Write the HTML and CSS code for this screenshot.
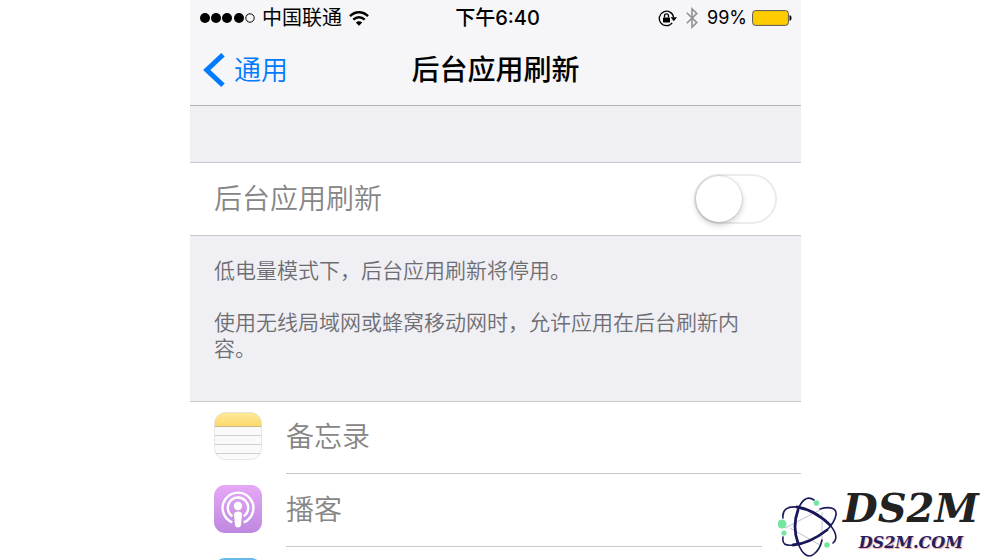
FILE: index.html
```
<!DOCTYPE html>
<html lang="zh-CN">
<head>
    <meta charset="UTF-8">
    <meta name="viewport" content="width=device-width, initial-scale=1.0">
    <title>后台应用刷新</title>
    <link rel="stylesheet" href="styles.css">
</head>
<body>
    <main class="phone">
        <header class="top">
            <div class="status">
                <div class="carrier">
                    <svg width="56" height="12" viewBox="0 0 56 12">
                        <circle cx="6" cy="6" r="5"/><circle cx="17" cy="6" r="5"/><circle cx="28" cy="6" r="5"/><circle cx="40" cy="6" r="5"/>
                        <circle cx="51" cy="6" r="4.2" fill="none" stroke="#000"/>
                    </svg>
                    <span>中国联通</span>
                    <svg width="20" height="15" viewBox="0 0 20 15" fill="none" stroke="#000" stroke-width="2.4">
                        <path d="M1 5.2C6 0 14 0 19 5.2"/>
                        <path d="M4.3 8.7C7.6 5.4 12.4 5.4 15.7 8.7"/>
                        <path d="M10 14.7L6.8 11.4C8.7 9.7 11.3 9.7 13.2 11.4Z" fill="#000" stroke="none"/>
                    </svg>
                </div>
                <div class="time">下午6:40</div>
                <div class="indicators">
                    <svg width="19" height="17" viewBox="0 0 19 17">
                        <path d="M14.2 12.8A7.2 7.2 0 1 1 15.6 7.4" fill="none" stroke="#000" stroke-width="1.3"/>
                        <path d="M12.6 7.3H19L15.8 11.2Z"/>
                        <rect x="5" y="7.4" width="7" height="5" rx=".6"/>
                        <path d="M6.5 7.6V5.9a2 2 0 0 1 4 0V7.6" fill="none" stroke="#000" stroke-width="1.3"/>
                    </svg>
                    <svg width="12" height="22" viewBox="0 0 12 22" fill="none" stroke="#929294" stroke-width="1.6">
                        <path d="M.8 5.8L10.8 15.6L6 20.2V1.8L10.8 6.4L.8 16.2"/>
                    </svg>
                    <span>99%</span>
                    <svg width="40" height="16" viewBox="0 0 40 16">
                        <rect x=".6" y=".6" width="35.8" height="14.8" rx="3" fill="#fc0" stroke="#555"/>
                        <path d="M37.5 5.2C40.2 5.2 40.2 10.8 37.5 10.8Z"/>
                    </svg>
                </div>
            </div>
            <nav class="nav">
                <a class="back" href="#">
                    <svg width="22" height="34" viewBox="0 0 22 34" fill="none" stroke="#007aff" stroke-width="5">
                        <path d="M20 1.8L3.8 17L20 32.2"/>
                    </svg>
                    <span>通用</span>
                </a>
                <h1>后台应用刷新</h1>
            </nav>
        </header>

        <section class="switch-row">
            <label for="refresh">后台应用刷新</label>
            <input type="checkbox" id="refresh" class="switch" disabled>
        </section>

        <section class="notes">
            <p>低电量模式下，后台应用刷新将停用。</p>
            <p>使用无线局域网或蜂窝移动网时，允许应用在后台刷新内容。</p>
        </section>

        <ul class="apps">
            <li>
                <svg class="icon" width="48" height="48" viewBox="0 0 48 48">
                    <defs>
                        <linearGradient id="yellow" x2="0" y2="1"><stop stop-color="#ffe99b"/><stop offset="1" stop-color="#fbd969"/></linearGradient>
                        <clipPath id="tile"><rect x=".5" y=".5" width="47" height="47" rx="11"/></clipPath>
                    </defs>
                    <g clip-path="url(#tile)">
                        <path d="M0 0H48V48H0Z" fill="#fafafa"/>
                        <path d="M0 0H48V15H0Z" fill="url(#yellow)"/>
                        <path d="M0 14.5H48" stroke="#cbb98d"/>
                        <path d="M0 23.5H48M0 32.5H48M0 41.5H48" stroke="#d0d0d0"/>
                    </g>
                    <rect x=".5" y=".5" width="47" height="47" rx="11" fill="none" stroke="#ddd" stroke-opacity=".7"/>
                </svg>
                <span class="name">备忘录</span>
            </li>
            <li>
                <svg class="icon" width="48" height="48" viewBox="0 0 48 48">
                    <defs>
                        <linearGradient id="purple" x2="0" y2="1"><stop stop-color="#e6a8f6"/><stop offset="1" stop-color="#bd88df"/></linearGradient>
                    </defs>
                    <rect width="48" height="48" rx="11" fill="url(#purple)"/>
                    <g fill="none" stroke="#fff" stroke-width="2.4">
                        <path d="M18.3 37.3A15.4 15.4 0 1 1 29.7 37.3"/>
                        <path d="M18.4 31.2A10.2 10.2 0 1 1 29.6 31.2"/>
                    </g>
                    <circle cx="24" cy="21" r="4.2" fill="#fff"/>
                    <path d="M20 29.5Q20 26.5 24 26.5T28 29.5L27 40Q26.7 42.5 24 42.5T21 40Z" fill="#fff"/>
                </svg>
                <span class="name">播客</span>
            </li>
            <li>
                <svg class="icon" width="48" height="48" viewBox="0 0 48 48"><rect width="48" height="48" rx="11" fill="#68b9ec"/></svg>
            </li>
        </ul>
    </main>

    <aside class="watermark">
        <svg width="62" height="64" viewBox="0 0 62 64" fill="none">
            <path d="M7 32L42 14M12 32L42 49M44 16V46" stroke="#c4c0d2"/>
            <g stroke="#1b1b5c" stroke-width="1.6" stroke-linecap="round">
                <path d="M36 4C29 -1 23 5 20 14M20 47C24 58 30 63 36 58C41 54 43 49 44 44"/>
                <path d="M5 22C4 14 9 10 19 11M52 29C58 36 60 43 55 47"/>
                <path d="M42 13C52 10 59 12 58 19C57 24 54 29 49 34M15 49C7 50 4 48 5 41"/>
            </g>
            <g stroke="#17175a" stroke-width="2.8" stroke-linecap="round">
                <path d="M20 14C16 25 16 36 20 47"/>
                <path d="M19 11C31 13 43 20 52 29"/>
                <path d="M49 34C40 41 27 48 15 49"/>
            </g>
            <g fill="#75e5a0">
                <circle cx="4" cy="28" r="4.5"/><circle cx="6" cy="37" r="2.6"/><circle cx="38.5" cy="7" r="2.8"/><circle cx="49" cy="49" r="2.8"/>
            </g>
        </svg>
        <div class="brand">
            <strong>DS2M</strong>
            <em>DS2M.COM</em>
        </div>
    </aside>
</body>
</html>
```
FILE: styles.css
```
* { box-sizing: border-box; }
body { margin: 0; padding: 0 199px 0 190px; background: #fff; color: #000; font-family: Inter, "Noto Sans CJK SC", sans-serif; }
svg { display: block; flex: none; }
h1, p, ul { margin: 0; padding: 0; }

.phone { height: 100vh; overflow: hidden; background: #efeff4; }
.top { height: 106px; background: #f6f6f8; border-bottom: 1px solid #b4b4b9; }
.status { display: grid; grid-template-columns: 1fr auto 1fr; align-items: center; height: 36px; padding: 0 9px; font-size: 20px; line-height: 36px; }
.carrier { display: flex; align-items: center; gap: 7px; }
.time { padding-left: 4px; font-weight: 500; }
.indicators { display: flex; align-items: center; justify-content: flex-end; gap: 9px; }
.indicators span { margin-right: -4px; font-size: 18px; }

.nav { display: grid; grid-template-columns: 1fr auto 1fr; align-items: center; height: 68px; padding: 0 13px; }
.back { display: flex; align-items: center; gap: 9px; color: #007aff; font-size: 27px; font-weight: 350; text-decoration: none; }
.back span, h1 { padding-bottom: 4px; }
h1 { font-size: 28px; font-weight: 500; }

.switch-row { display: flex; align-items: center; justify-content: space-between; height: 74px; margin-top: 56px; padding: 0 24px; background: #fff; border: solid #c8c7cc; border-width: 1px 0; color: #868686; font-size: 28px; font-weight: 350; }
.switch-row label { padding-bottom: 4px; }
.switch { appearance: none; width: 83px; height: 50px; margin: 0; border: 2px solid #ebebeb; border-radius: 25px; background: #fff; }
.switch::before { content: ""; display: block; width: 46px; height: 46px; border-radius: 50%; background: #fff; box-shadow: 0 3px 6px rgba(0, 0, 0, .2), 0 0 2px rgba(0, 0, 0, .25); }

.notes { padding: 22px 24px 39px; color: #6d6d72; font-size: 21px; font-weight: 350; line-height: 26px; }
.notes p + p { margin-top: 26px; }

.apps { list-style: none; background: #fff; border-top: 1px solid #c8c7cc; }
.apps li { display: flex; gap: 24px; height: 73px; padding-left: 24px; }
.icon { margin-top: 10px; }
.name { flex: 1; height: 72px; line-height: 70px; border-bottom: 1px solid #c8c7cc; color: #868686; font-size: 28px; font-weight: 350; }

.watermark { position: absolute; right: 0; bottom: 0; display: flex; align-items: flex-end; gap: 3px; width: 238px; height: 76px; padding-left: 16px; background: #fff; }
.brand { display: flex; flex-direction: column; align-items: center; align-self: flex-start; gap: 2px; font-family: "DejaVu Serif", serif; font-style: italic; font-weight: bold; }
.brand strong { color: #222; font-size: 40px; line-height: 47px; }
.brand em { color: #25205f; font-size: 16px; line-height: 20px; text-shadow: 1px 1px 1px #e9a5a5; }
```
